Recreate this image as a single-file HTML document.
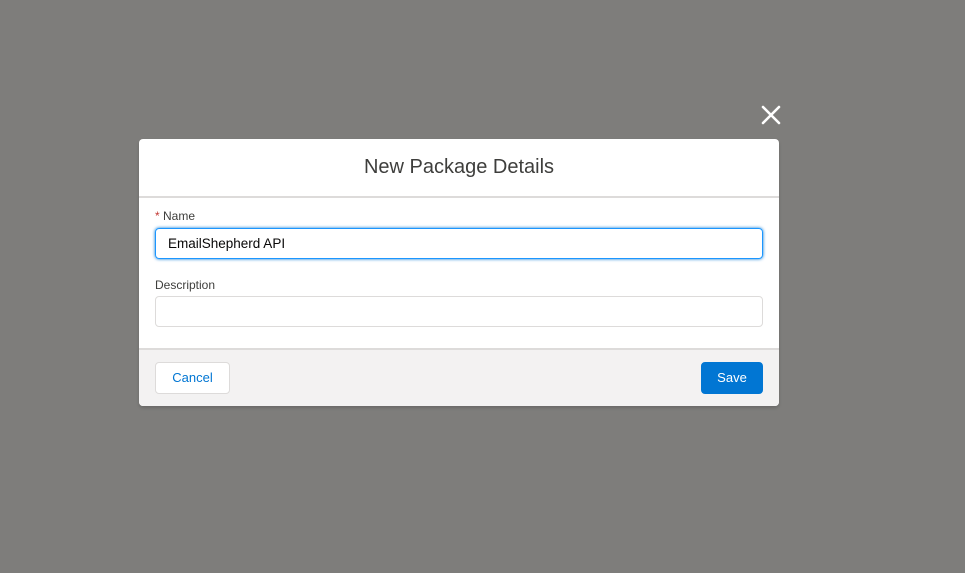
<!DOCTYPE html>
<html><head><style>
body{margin:0;width:965px;height:573px;background:#7e7d7b;font-family:"Liberation Sans",sans-serif;position:relative;overflow:hidden}
.x{position:absolute;left:760px;top:104px;width:22px;height:22px}
.m{position:absolute;left:139px;top:139px;width:640px;height:267px;background:#fff;border-radius:4px;overflow:hidden;box-shadow:0 2px 3px rgba(0,0,0,.16)}
.h{height:57px;border-bottom:2px solid #dddbda;text-align:center;line-height:56px;font-size:20px;color:#3e3e3c;font-weight:300}
.l{position:absolute;left:16px;font-size:12px;color:#3e3e3c}
.i{position:absolute;left:16px;width:608px;border:1px solid #dddbda;border-radius:4px;box-sizing:border-box;font-size:13.5px;color:#080707;padding-left:12px}
.f{position:absolute;left:0;top:209px;width:640px;height:58px;background:#f3f2f2;border-top:2px solid #dddbda;box-sizing:border-box}
.b{position:absolute;top:12px;height:32px;border-radius:4px;box-sizing:border-box;font-size:13px;line-height:30px;text-align:center}
</style></head><body>
<svg class="x" viewBox="0 0 22 22"><path d="M3 3L19 19M19 3L3 19" stroke="#fff" stroke-width="2.6" stroke-linecap="round"/></svg>
<div class="m">
<div class="h">New Package Details</div>
<div class="l" style="top:70px"><span style="color:#c23934">*</span> Name</div>
<div class="i" style="top:89px;height:31px;line-height:29px;border:1px solid #1b96ff;box-shadow:0 0 3px #0176d3">EmailShepherd API</div>
<div class="l" style="top:139px">Description</div>
<div class="i" style="top:157px;height:31px"></div>
<div class="f">
<div class="b" style="left:16px;width:75px;background:#fff;border:1px solid #dddbda;color:#0176d3">Cancel</div>
<div class="b" style="left:562px;width:62px;background:#0176d3;border:1px solid #0176d3;color:#fff">Save</div>
</div>
</div>
</body></html>
